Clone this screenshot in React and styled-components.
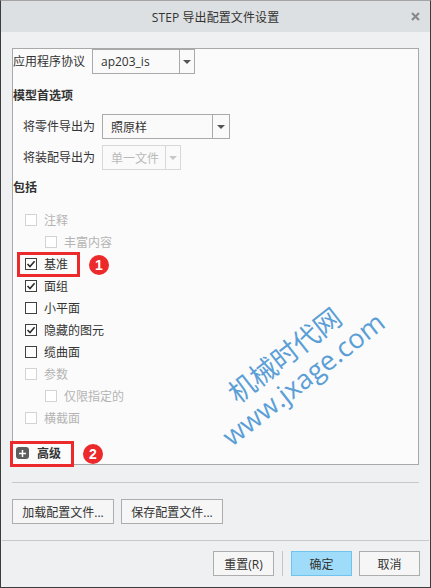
import React from "react";
import styled, { createGlobalStyle } from "styled-components";

const GlobalStyle = createGlobalStyle`
  html, body {
    margin: 0;
    padding: 0;
    background: #ffffff;
  }
  body {
    font-family: "Open Sans", "Noto Sans CJK SC", sans-serif;
    font-size: 12px;
    color: #333;
  }
`;

const Dialog = styled.div`
  position: relative;
  width: 431px;
  height: 588px;
  box-sizing: border-box;
  border: 1px solid #3c3c3c;
  border-top-color: #a4a4a4;
  background: #eff0f2;
  display: flex;
  flex-direction: column;
  overflow: hidden;
`;

const TitleBar = styled.div`
  height: 31px;
  flex: none;
  background: #dde0e2;
  display: grid;
  grid-template-columns: 1fr auto 1fr;
  align-items: center;
  font-size: 12px;
  color: #333;
`;

const Title = styled.div`
  grid-column: 2;
  letter-spacing: 0.1px;
`;

const CloseBtn = styled.div`
  grid-column: 3;
  justify-self: end;
  margin-right: 10px;
  width: 9px;
  height: 9px;
  display: flex;
`;

const Body = styled.div`
  padding: 16px 11px 0 11px;
  display: flex;
  flex-direction: column;
`;

const Panel = styled.div`
  height: 417px;
  box-sizing: border-box;
  border: 1px solid #a9a9a9;
  background: #fbfbfb;
  display: flex;
  flex-direction: column;
`;

const FieldRow = styled.div`
  display: flex;
  align-items: center;
  margin-top: ${(p) => p.$top || 0}px;
  margin-left: ${(p) => p.$indent || 0}px;
`;

const Label = styled.div`
  width: ${(p) => p.$width}px;
  line-height: 16px;
  color: #333;
`;

const Select = styled.div`
  width: ${(p) => p.$width}px;
  height: 25px;
  box-sizing: border-box;
  border: 1px solid ${(p) => (p.$disabled ? "#d8d8d8" : "#a9a9a9")};
  background: #fafafa;
  display: flex;
  color: ${(p) => (p.$disabled ? "#b9b9b9" : "#333")};
`;

const SelectValue = styled.div`
  flex: 1;
  padding-left: 8px;
  display: flex;
  align-items: center;
`;

const SelectArrow = styled.div`
  width: ${(p) => p.$w || 14}px;
  border-left: 1px solid ${(p) => (p.$disabled ? "#d8d8d8" : "#a9a9a9")};
  display: flex;
  align-items: center;
  justify-content: center;
  &::after {
    content: "";
    border-left: 4px solid transparent;
    border-right: 4px solid transparent;
    border-top: 4px solid ${(p) => (p.$disabled ? "#c8c8c8" : "#555")};
  }
`;

const Heading = styled.div`
  font-weight: bold;
  line-height: 20px;
  margin-top: ${(p) => p.$top}px;
  color: #333;
`;

const CheckList = styled.div`
  margin-top: 11px;
  display: flex;
  flex-direction: column;
`;

const CheckRow = styled.div`
  height: 22px;
  display: flex;
  align-items: center;
  padding-left: ${(p) => (p.$level === 2 ? 32 : 12)}px;
  color: ${(p) => (p.$disabled ? "#b4b4b4" : "#333")};
`;

const Box = styled.span`
  width: 12px;
  height: 12px;
  box-sizing: border-box;
  border: 1px solid ${(p) => (p.$disabled ? "#d3d3d3" : "#404040")};
  background: #fff;
  margin-right: 7px;
  display: flex;
  align-items: center;
  justify-content: center;
`;

const AdvancedRow = styled.div`
  margin-top: 14px;
  height: 20px;
  display: flex;
  align-items: center;
  padding-left: 3px;
  font-weight: bold;
  color: #333;
`;

const PlusIcon = styled.span`
  width: 13px;
  height: 12px;
  border-radius: 3px;
  background: #5e5e5e;
  margin-right: 8px;
  display: flex;
  align-items: center;
  justify-content: center;
`;

const Separator = styled.div`
  height: 1px;
  background: #c9c9c9;
  margin: ${(p) => p.$margin};
`;

const ButtonRow = styled.div`
  display: flex;
  align-items: center;
  gap: ${(p) => p.$gap || 7}px;
  justify-content: ${(p) => (p.$end ? "flex-end" : "flex-start")};
  padding: ${(p) => p.$pad};
`;

const Button = styled.div`
  width: ${(p) => p.$width}px;
  height: 25px;
  box-sizing: border-box;
  border: 1px solid ${(p) => (p.$primary ? "#6fc3ec" : "#adadad")};
  background: ${(p) => (p.$primary ? "#9fdcf9" : "#f6f6f6")};
  display: flex;
  align-items: center;
  justify-content: center;
  color: #333;
`;

const VLine = styled.div`
  width: 1px;
  height: 25px;
  background: #c6c6c6;
  margin: 0 1px;
`;

const Callout = styled.div`
  position: absolute;
  left: ${(p) => p.$x}px;
  top: ${(p) => p.$y}px;
  width: ${(p) => p.$w}px;
  height: ${(p) => p.$h}px;
  box-sizing: border-box;
  border: 3px solid #ec2a2c;
  pointer-events: none;
`;

const Badge = styled.div`
  position: absolute;
  left: ${(p) => p.$x - 10}px;
  top: ${(p) => p.$y - 10}px;
  width: 20px;
  height: 20px;
  border-radius: 50%;
  background: #ec2a2c;
  color: #fff;
  font-family: "Liberation Sans", Arial, sans-serif;
  font-weight: bold;
  font-size: 14px;
  display: flex;
  align-items: center;
  justify-content: center;
`;

const Watermark = styled.div`
  position: absolute;
  left: 293px;
  top: 366px;
  width: 0;
  height: 0;
  pointer-events: none;
`;

const WatermarkText = styled.div`
  position: absolute;
  left: 0;
  top: 0;
  transform: translate(-50%, -50%) rotate(-38deg);
  color: #5b9fd6;
  font-family: "Open Sans", "Noto Sans CJK SC", sans-serif;
  font-size: 27px;
  line-height: 30px;
  text-align: center;
  white-space: nowrap;
`;

const Check = () => (
  <svg width="10" height="10" viewBox="0 0 10 10">
    <path d="M1.5 5 L4 7.5 L8.6 2.3" fill="none" stroke="#2b2b2b" strokeWidth="1.6" />
  </svg>
);

const items = [
  { label: "注释", disabled: true },
  { label: "丰富内容", disabled: true, level: 2 },
  { label: "基准", checked: true },
  { label: "面组", checked: true },
  { label: "小平面" },
  { label: "隐藏的图元", checked: true },
  { label: "缆曲面" },
  { label: "参数", disabled: true },
  { label: "仅限指定的", disabled: true, level: 2 },
  { label: "横截面", disabled: true },
];

export default function App() {
  return (
    <>
      <GlobalStyle />
      <Dialog>
        <TitleBar>
          <Title>STEP 导出配置文件设置</Title>
          <CloseBtn>
            <svg width="9" height="9" viewBox="0 0 9 9">
              <path d="M1 1 L8 8 M8 1 L1 8" stroke="#8a8a8a" strokeWidth="2.2" />
            </svg>
          </CloseBtn>
        </TitleBar>
        <Body>
          <Panel>
            <FieldRow>
              <Label $width={79}>应用程序协议</Label>
              <Select $width={103}>
                <SelectValue>ap203_is</SelectValue>
                <SelectArrow />
              </Select>
            </FieldRow>
            <Heading $top={12}>模型首选项</Heading>
            <FieldRow $top={8} $indent={10}>
              <Label $width={79}>将零件导出为</Label>
              <Select $width={128}>
                <SelectValue>照原样</SelectValue>
                <SelectArrow $w={16} />
              </Select>
            </FieldRow>
            <FieldRow $top={6} $indent={10}>
              <Label $width={79}>将装配导出为</Label>
              <Select $width={79} $disabled>
                <SelectValue>单一文件</SelectValue>
                <SelectArrow $disabled />
              </Select>
            </FieldRow>
            <Heading $top={8}>包括</Heading>
            <CheckList>
              {items.map((it) => (
                <CheckRow key={it.label} $disabled={it.disabled} $level={it.level}>
                  <Box $disabled={it.disabled}>{it.checked && <Check />}</Box>
                  {it.label}
                </CheckRow>
              ))}
            </CheckList>
            <AdvancedRow>
              <PlusIcon>
                <svg width="9" height="9" viewBox="0 0 9 9">
                  <path d="M4.5 1 V8 M1 4.5 H8" stroke="#fff" strokeWidth="1.5" />
                </svg>
              </PlusIcon>
              高级
            </AdvancedRow>
          </Panel>
          <Separator $margin="17px 0 0 0" />
          <ButtonRow $pad="16px 0 0 0" $gap={7}>
            <Button $width={102}>加载配置文件...</Button>
            <Button $width={102}>保存配置文件...</Button>
          </ButtonRow>
        </Body>
        <Separator $margin="16px 1px 0 1px" />
        <ButtonRow $end $pad="10px 10px 0 0" $gap={7}>
          <Button $width={61}>重置(R)</Button>
          <VLine />
          <Button $width={61} $primary>确定</Button>
          <Button $width={61}>取消</Button>
        </ButtonRow>

        <Callout $x={16} $y={251} $w={63} $h={25} />
        <Badge $x={98} $y={264}>1</Badge>
        <Callout $x={9} $y={440} $w={64} $h={26} />
        <Badge $x={92} $y={453}>2</Badge>
        <Watermark>
          <WatermarkText>
            机械时代网
            <br />
            www.jxage.com
          </WatermarkText>
        </Watermark>
      </Dialog>
    </>
  );
}
